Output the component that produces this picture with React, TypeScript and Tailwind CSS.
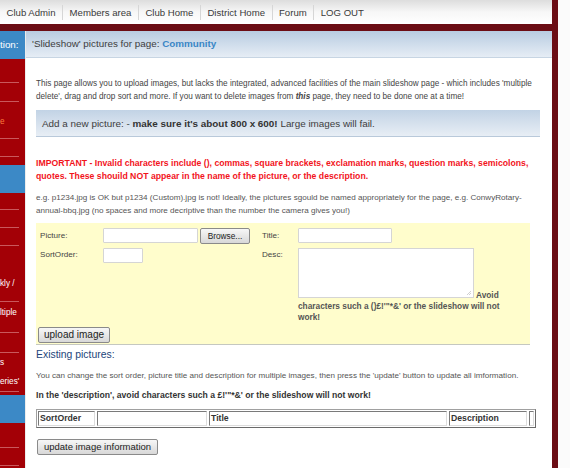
const FONT = "font-[family-name:'Liberation_Sans',Arial,sans-serif]"

const navItems = ['Club Admin', 'Members area', 'Club Home', 'District Home', 'Forum', 'LOG OUT']

// left menu strip: only the clipped right ends of the entries show
type SideItem = { h: string; blue?: boolean; line?: boolean; text?: string[]; textClass?: string; orange?: boolean }
const sideItems: SideItem[] = [
  { h: 'h-[28px]', blue: true, text: ['tion:'], textClass: 'justify-center text-[9.8px]' },
  { h: 'h-[24px]', line: true },
  { h: 'h-[19px]', line: true },
  { h: 'h-[37px]', line: true, text: ['e'], orange: true, textClass: 'justify-center pt-[3px]' },
  { h: 'h-[18px]', line: true },
  { h: 'h-[8px]' },
  { h: 'h-[28px]', blue: true },
  { h: 'h-[17px]', line: true },
  { h: 'h-[18px]', line: true },
  { h: 'h-[18px]', line: true },
  { h: 'h-[56px]', line: true, text: ['kly /'], textClass: 'justify-end pb-[11px]' },
  { h: 'h-[31px]', line: true, text: ['ltiple'], textClass: 'justify-start pt-[5px]' },
  { h: 'h-[20px]', line: true },
  { h: 'h-[35px]', line: true, text: ['s', "eries'"], textClass: 'justify-start pt-[0px] leading-[19px]' },
  { h: 'h-[7px]' },
  { h: 'h-[28px]', blue: true },
  { h: 'h-[25px]', line: true },
  { h: 'h-[18px]', line: true },
  { h: 'flex-1' },
]

function Sidebar() {
  return (
    <div className="w-[26px] flex flex-col bg-[#a30006] border-r border-[#ececec] overflow-hidden">
      {sideItems.map((item, i) => (
        <div key={i} className={`${item.h} ${item.blue ? 'bg-[#3c89c6]' : ''} flex flex-col`}>
          <div className={`flex-1 flex flex-col whitespace-nowrap text-[8.2px] leading-[12px] ${item.orange ? 'text-[#ff7a3c]' : 'text-white'} ${item.textClass ?? ''}`}>
            {item.text?.map((t) => <span key={t}>{t}</span>)}
          </div>
          {item.line && <div className="mr-[6px] border-b border-[#c9585c]"></div>}
        </div>
      ))}
    </div>
  )
}

function Btn({ children, className = '' }: { children: React.ReactNode; className?: string }) {
  return (
    <button className={`h-[16px] px-0 leading-none text-[#222] border border-[#8a8a8a] rounded-[2px] bg-gradient-to-b from-[#f7f7f7] to-[#d8d8d8] ${className}`}>
      {children}
    </button>
  )
}

function Input({ className = '' }: { className?: string }) {
  return <div className={`h-[15px] bg-white border border-[#d5d5d5] rounded-[1px] ${className}`}></div>
}

function UploadForm() {
  return (
    <div className="mt-[6px] w-[494px] bg-[#fffdcc] border-b border-[#c5c8c0] pt-[5px] pb-[1px] pl-[2px] text-[8.1px] text-[#444]">
      <div className="flex items-start">
        <div className="w-[65px] pl-[2px] leading-[15px]">Picture:</div>
        <Input className="w-[95px]" />
        <Btn className="ml-[2px] w-[50px] text-[8.3px]">Browse...</Btn>
        <div className="w-[36px] ml-[12px] leading-[15px]">Title:</div>
        <Input className="w-[94px]" />
      </div>
      <div className="flex items-start mt-[3px]">
        <div className="w-[65px] pl-[2px] leading-[15px]">SortOrder:</div>
        <Input className="w-[40px] mt-[1px]" />
        <div className="w-[36px] ml-[119px] leading-[15px]">Desc:</div>
        <div className="w-[212px] mt-[1px] font-bold text-[8.3px] leading-[11px] text-[#555]">
          <span className="inline-block w-[176px] h-[50px] bg-white border border-[#d5d5d5] relative">
            {/* resize grip */}
            <svg className="absolute right-[1px] bottom-[1px]" width="6" height="6" viewBox="0 0 6 6">
              <path d="M1 5 L5 1 M3 5 L5 3" stroke="#c4c4c4" strokeWidth="0.8" />
            </svg>
          </span>{' '}
          Avoid characters such a ()£!'"*&amp;' or the slideshow will not work!
        </div>
      </div>
      <Btn className="mt-[4px] w-[72px] text-[10px]">upload image</Btn>
    </div>
  )
}

function PicTable() {
  const cell = 'h-[15px] border border-t-[#7a7a7a] border-l-[#7a7a7a] border-r-[#dcdcdc] border-b-[#dcdcdc] px-[1px] flex items-center font-bold text-[8.7px] text-[#333]'
  return (
    <div className="mt-[7px] w-[500px] h-[19px] border border-[#a0a0a0] border-b-[#6a6a6a] border-r-[#6a6a6a] p-[1px] flex gap-[2px]">
      <div className={`${cell} w-[57px]`}>SortOrder</div>
      <div className={`${cell} w-[110px]`}></div>
      <div className={`${cell} w-[238px]`}>Title</div>
      <div className={`${cell} w-[78px]`}>Description</div>
      <div className={`${cell} w-[5px]`}></div>
    </div>
  )
}

export default function App() {
  return (
    <div className={`w-[570px] h-[468px] overflow-hidden bg-white flex ${FONT}`}>
      <div className="w-[552px] flex flex-col">
        {/* top menu */}
        <div className="h-[24px] flex items-center bg-gradient-to-b from-[#dddddd] via-[#f7f7f7] to-white text-[9.6px] text-[#3a3a3a]">
          {navItems.map((n, i) => (
            <div key={n} className={`px-[6.5px] leading-[15px] ${i > 0 ? 'border-l border-[#d6d6d6]' : ''}`}>{n}</div>
          ))}
        </div>
        <div className="h-[7px] bg-[#6b0d15]"></div>

        <div className="flex-1 flex min-h-0">
          <Sidebar />

          <div className="flex-1 flex flex-col">
            {/* page heading */}
            <div className="h-[27px] flex items-center pl-[6px] bg-gradient-to-b from-[#b8cce1] to-[#e6edf5] border-b border-[#c7d5e3] text-[9.85px] text-[#3d3d3d]">
              <span>'Slideshow' pictures for page:&nbsp;</span>
              <span className="font-bold text-[#3a86c6]">Community</span>
            </div>

            <div className="pl-[10px] pt-[19px] text-[8.2px] leading-[13px] text-[#444]">
              <p>
                This page allows you to upload images, but lacks the integrated, advanced facilities of the main slideshow page - which includes 'multiple
                <br />
                delete', drag and drop sort and more. If you want to delete images from <b><i>this</i></b> page, they need to be done one at a time!
              </p>

              <div className="mt-[7px] w-[504px] h-[27px] flex items-center pl-[6px] bg-gradient-to-b from-[#c2d3e5] to-[#e8eef5] border-b border-[#b9c9da] text-[9.9px] text-[#3d3d3d]">
                Add a new picture: -&nbsp;<b className="text-[#333]">make sure it's about 800 x 600!</b>&nbsp;Large images will fail.
              </div>

              <p className="mt-[20px] font-bold text-[8.7px] text-[#f2141c]">
                IMPORTANT - Invalid characters include (), commas, square brackets, exclamation marks, question marks, semicolons,
                <br />
                quotes. These shouild NOT appear in the name of the picture, or the description.
              </p>

              <p className="mt-[8px] text-[8.1px] text-[#555]">
                e.g. p1234.jpg is OK but p1234 (Custom).jpg is not! Ideally, the pictures sgould be named appropriately for the page, e.g. ConwyRotary-
                <br />
                annual-bbq.jpg (no spaces and more decriptive than the number the camera gives you!)
              </p>

              <UploadForm />

              <h3 className="mt-[2px] text-[10.4px] leading-[16px] text-[#23457a]">Existing pictures:</h3>

              <p className="mt-[6px] text-[8.1px] text-[#555]">
                You can change the sort order, picture title and description for multiple images, then press the 'update' button to update all imformation.
              </p>

              <p className="mt-[7px] font-bold text-[8.65px] text-[#333]">
                In the 'description', avoid characters such a £!'"*&amp;' or the slideshow will not work!
              </p>

              <PicTable />

              <Btn className="mt-[11px] w-[121px] ml-[1px] text-[9.5px]">update image information</Btn>
            </div>
          </div>
        </div>
      </div>
      <div className="w-[6px] bg-[#6b0d15]"></div>
      <div className="flex-1 bg-[#fbfbfb]"></div>
    </div>
  )
}
